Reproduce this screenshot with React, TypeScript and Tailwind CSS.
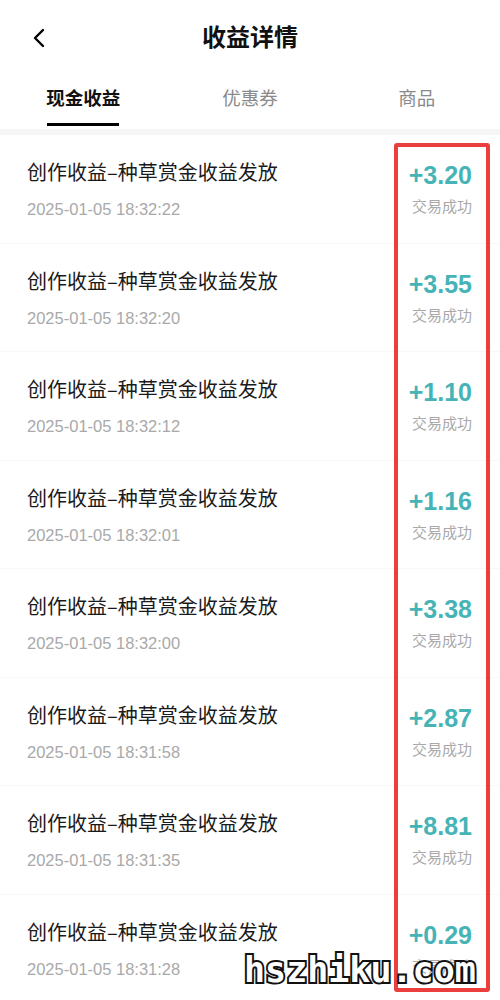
import { ChevronLeft } from 'lucide-react'

const rows = [
    { amount: '+3.20', time: '2025-01-05 18:32:22' },
    { amount: '+3.55', time: '2025-01-05 18:32:20' },
    { amount: '+1.10', time: '2025-01-05 18:32:12' },
    { amount: '+1.16', time: '2025-01-05 18:32:01' },
    { amount: '+3.38', time: '2025-01-05 18:32:00' },
    { amount: '+2.87', time: '2025-01-05 18:31:58' },
    { amount: '+8.81', time: '2025-01-05 18:31:35' },
    { amount: '+0.29', time: '2025-01-05 18:31:28' },
]

const cjk = "font-['Noto_Sans_CJK_SC',sans-serif]"
const latin = "font-['Liberation_Sans','Noto_Sans_CJK_SC',sans-serif]"

export default function App() {
    return (
        <div className="relative w-[500px] h-[1000px] overflow-hidden bg-white">
            {/* header */}
            <div className="relative h-[76px] flex items-center justify-center pb-[4px]">
                <ChevronLeft size={32} strokeWidth={1.8} className="absolute left-[23px] top-[22px] text-black" />
                <h1 className={`${cjk} text-[24px] font-bold text-[#111]`}>收益详情</h1>
            </div>

            {/* tabs */}
            <div className={`${cjk} grid grid-cols-3 h-[53px]`}>
                <div className="flex flex-col items-center pt-[8px]">
                    <span className="text-[18.5px] font-bold text-[#111] leading-[26px]">现金收益</span>
                    <div className="mt-[13px] h-[3px] w-[72px] bg-black" />
                </div>
                <div className="flex justify-center pt-[8px]">
                    <span className="text-[18.5px] text-[#8a8a8a] leading-[26px]">优惠券</span>
                </div>
                <div className="flex justify-center pt-[8px]">
                    <span className="text-[18.5px] text-[#8a8a8a] leading-[26px]">商品</span>
                </div>
            </div>
            <div className="h-[6px] bg-[#f6f6f6]" />

            {/* list */}
            <div className="flex flex-col">
                {rows.map((row, i) => (
                    <div key={i} className="h-[108.5px] flex justify-between pl-[27px] pr-[28px] border-b border-[#f8f8f8]">
                        <div className="flex flex-col pt-[24px]">
                            <span className={`${cjk} text-[20px] text-[#1a1a1a] leading-[26px]`}>创作收益–种草赏金收益发放</span>
                            <span className={`${latin} mt-[12px] text-[16.5px] text-[#a9a9a9] leading-[24px]`}>{row.time}</span>
                        </div>
                        <div className="flex flex-col items-end pt-[26px]">
                            <span className={`${latin} text-[25px] font-bold text-[#46b4b6] leading-[28px]`}>{row.amount}</span>
                            <span className={`${cjk} mt-[6px] text-[15px] text-[#a9a9a9] leading-[22px]`}>交易成功</span>
                        </div>
                    </div>
                ))}
            </div>

            {/* highlight box */}
            <div className="absolute left-[394px] top-[143px] w-[96px] h-[849px] border-[4px] border-[#ea3f3c] rounded-[3px]" />

            {/* watermark */}
            <div className="absolute left-[244px] top-[950px] font-['DejaVu_Sans_Mono',monospace] font-bold text-[35px] leading-[40px] text-white [-webkit-text-stroke:4px_#111] [paint-order:stroke_fill]">
                hszhiku.com
            </div>
        </div>
    )
}
